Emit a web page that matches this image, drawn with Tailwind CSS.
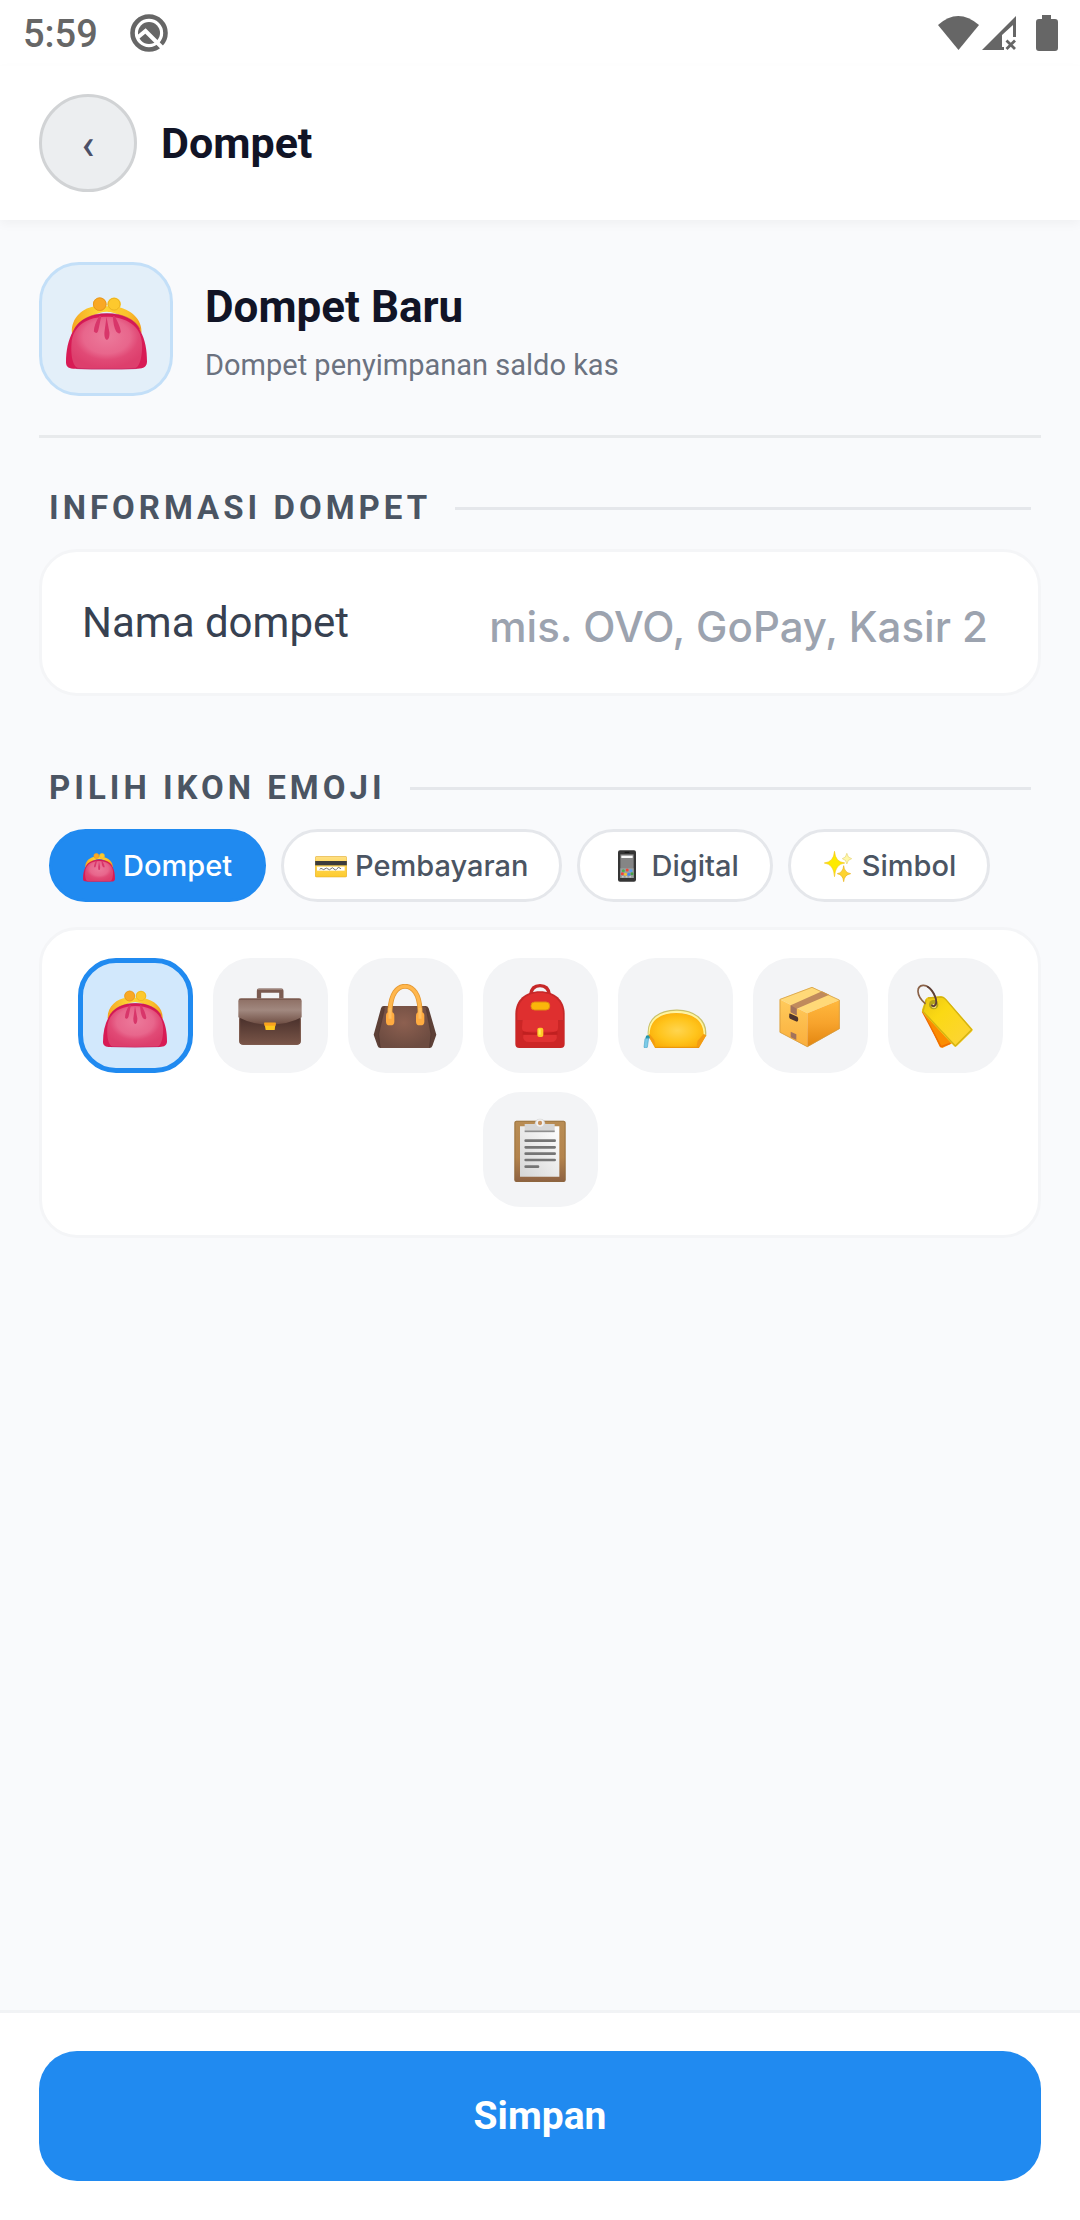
<!DOCTYPE html>
<html lang="id">
<head>
  <meta charset="UTF-8">
  <meta name="viewport" content="width=device-width, initial-scale=1.0">
  <title>Dompet</title>
  <script src="https://cdn.jsdelivr.net/npm/@tailwindcss/browser@4"></script>
</head>
<body class="bg-[#f9fafc] min-h-screen flex flex-col font-['Roboto',sans-serif]">

  <!-- Emoji artwork -->
  <svg class="absolute size-0" aria-hidden="true">
    <defs>
      <radialGradient id="g-purse" cx="0.5" cy="0.38" r="0.6">
        <stop offset="0" stop-color="#ec7a9b"/><stop offset="0.55" stop-color="#e8668c"/><stop offset="0.75" stop-color="#e14a76"/><stop offset="1" stop-color="#dd3f6d"/>
      </radialGradient>
      <linearGradient id="g-gold" x1="0" x2="1">
        <stop offset="0" stop-color="#f5a623"/><stop offset="0.4" stop-color="#fdd835"/><stop offset="0.8" stop-color="#fbc02d"/><stop offset="1" stop-color="#f2a01f"/>
      </linearGradient>
      <linearGradient id="g-flap" x1="0" y1="0" x2="0" y2="1">
        <stop offset="0" stop-color="#8d6e63"/><stop offset="0.45" stop-color="#a1887f"/><stop offset="1" stop-color="#6d4c41"/>
      </linearGradient>
      <linearGradient id="g-case" x1="0" y1="0" x2="0" y2="1">
        <stop offset="0.4" stop-color="#4e342e"/><stop offset="1" stop-color="#795548"/>
      </linearGradient>
      <radialGradient id="g-bag" cx="0.48" cy="0.4" r="0.6">
        <stop offset="0" stop-color="#8d6050"/><stop offset="1" stop-color="#6d4c41"/>
      </radialGradient>
      <radialGradient id="g-pouch" cx="0.5" cy="0.5" r="0.55">
        <stop offset="0" stop-color="#ffd54f"/><stop offset="0.6" stop-color="#ffc41c"/><stop offset="1" stop-color="#fbae08"/>
      </radialGradient>
      <linearGradient id="g-board" x1="0" y1="0" x2="0" y2="1">
        <stop offset="0" stop-color="#b98d54"/><stop offset="0.6" stop-color="#b3834c"/><stop offset="1" stop-color="#8d6142"/>
      </linearGradient>
      <linearGradient id="g-paper" x1="0" y1="1" x2="1" y2="0">
        <stop offset="0" stop-color="#d5d5d5"/><stop offset="1" stop-color="#ffffff"/>
      </linearGradient>
      <linearGradient id="g-boxr" x1="0" y1="0" x2="0" y2="1">
        <stop offset="0" stop-color="#ffb93e"/><stop offset="0.5" stop-color="#f7a32c"/><stop offset="1" stop-color="#e2850f"/>
      </linearGradient>
      <linearGradient id="g-boxl" x1="0" y1="0" x2="0" y2="1">
        <stop offset="0" stop-color="#ffcb5c"/><stop offset="1" stop-color="#faae3c"/>
      </linearGradient>
      <linearGradient id="g-tag" x1="0" y1="0" x2="1" y2="1">
        <stop offset="0" stop-color="#e9c312"/><stop offset="0.35" stop-color="#fbd914"/><stop offset="1" stop-color="#fdd33c"/>
      </linearGradient>
      <linearGradient id="g-card" x1="0" y1="0" x2="0" y2="1">
        <stop offset="0" stop-color="#ffe082"/><stop offset="0.5" stop-color="#ffd54f"/><stop offset="1" stop-color="#fdcb2e"/>
      </linearGradient>

      <symbol id="e-purse" viewBox="0 0 192 192">
        <path d="M74 54 78 34H89L91 54ZM100 54 101 36H113L117 54Z" fill="#f3a51f"/>
        <path d="M14 104C12 68 40 43 73 41Q82 40 83 34H88V41H100L104 34Q107 40 120 42C154 48 181 72 179 104L166 98Q96 10 28 98Z" fill="url(#g-gold)"/>
        <circle cx="80" cy="36" r="16" fill="#f9a825"/>
        <circle cx="80" cy="36" r="15" fill="none" stroke="#e2941d" stroke-width="2"/>
        <circle cx="114" cy="36" r="16" fill="#fdc92d"/>
        <circle cx="114" cy="36" r="14" fill="none" stroke="#e8b021" stroke-width="2"/>
        <path d="M17 99C30 72 60 58 97 58S166 72 176 99C188 120 192 146 192 172C192 184 184 189 170 189H22C8 189 0 185 0 174C0 146 5 121 17 99Z" fill="#d81b55"/>
        <path d="M13 130C16 86 52 66 97 66S178 88 180 128C182 154 176 189 160 189H34C16 189 11 158 13 130Z" fill="url(#g-purse)"/>
        <path d="M22 95C36 72 62 59 97 59S162 72 174 95" fill="none" stroke="#c2185b" stroke-opacity="0.5" stroke-width="4"/>
        <path d="M24 188Q96 192 168 188" fill="none" stroke="#c2185b" stroke-opacity="0.55" stroke-width="3"/>
        <path d="M79 64C71 76 66 90 66 101Q74 110 77 96C80 84 81 74 84 64ZM96 66 91 103C90 126 104 126 103 103ZM111 64C112 80 114 92 119 101Q128 110 130 101C128 88 122 76 115 64Z" fill="#d8366a"/>
      </symbol>

      <symbol id="e-briefcase" viewBox="0 0 192 192">
        <path d="M63 44V20H130V44" fill="none" stroke="#7b5b51" stroke-width="13" stroke-linejoin="round"/>
        <path d="M59 16H134" stroke="#a18880" stroke-width="3"/>
        <path d="M4 60H188V172Q188 182 178 182H14Q4 182 4 172Z" fill="url(#g-case)"/>
        <path d="M1 52Q1 43 10 43H182Q191 43 191 52V100Q150 122 96 122T1 100Z" fill="url(#g-flap)"/>
        <path d="M4 46H188" stroke="#7a5a50" stroke-width="4"/>
        <path d="M5 104V172Q5 181 14 181H178Q187 181 187 172V104" fill="none" stroke="#795548" stroke-width="3"/>
        <path d="M79 116H113L110 138H83Z" fill="#fdc71c"/>
        <path d="M79 116H113V125H79Z" fill="#f9a11f"/>
      </symbol>

      <symbol id="e-handbag" viewBox="0 0 192 192">
        <path d="M32 66H158Q164 66 167 73L190 152 178 186Q176 192 170 192H22Q16 192 14 186L2 152 24 73Q26 66 32 66Z" fill="#5d4037"/>
        <path d="M40 66H150Q158 66 160 74L174 150 168 192H24L17 150 34 74Q36 66 40 66Z" fill="url(#g-bag)"/>
        <path d="M17 150 20 188M174 150 170 188M34 76 17 150M160 76 174 150" stroke="#4e342e" stroke-opacity="0.6" stroke-width="3"/>
        <path d="M51 96V78C54 30 72 7 96 7S139 30 141 78V96" fill="none" stroke="#e59a35" stroke-width="15"/>
        <path d="M51 96V78C54 30 72 7 96 7S139 30 141 78V96" fill="none" stroke="#ffb74d" stroke-width="10"/>
        <rect x="39" y="84" width="25" height="40" rx="11" fill="#ffab40"/>
        <rect x="129" y="84" width="25" height="40" rx="11" fill="#ffab40"/>
        <path d="M51 72V104M141 72V104" stroke="#ffbf62" stroke-width="9"/>
      </symbol>

      <symbol id="e-backpack" viewBox="0 0 192 192">
        <path d="M68 32C70 14 80 5 96 5S122 14 124 32" fill="none" stroke="#c62828" stroke-width="10"/>
        <path d="M22 90C22 48 52 22 96 22S170 48 170 90V180Q170 192 158 192H34Q22 192 22 180Z" fill="#c62828"/>
        <path d="M28 90C28 52 56 26 96 26S165 52 165 90V108H28Z" fill="#df2f2f"/>
        <path d="M24 112H168V178Q168 188 158 188H34Q24 188 24 178Z" fill="#cc2626"/>
        <path d="M44 107H150V132Q150 143 138 143H54Q42 143 42 132Z" fill="#e03232"/>
        <path d="M46 152H146Q150 174 128 174H64Q42 174 46 152Z" fill="#e03232"/>
        <path d="M44 142Q96 156 148 142L148 152H44Z" fill="#b71c1c" fill-opacity="0.55"/>
        <rect x="69" y="54" width="56" height="24" rx="11" fill="#fbb50a" stroke="#e08a12" stroke-width="3"/>
        <rect x="88" y="131" width="18" height="28" rx="6" fill="#ffca28"/>
        <path d="M95 136V152" stroke="#ffee58" stroke-width="6"/>
      </symbol>

      <symbol id="e-pouch" viewBox="0 0 192 192">
        <path d="M18 156C12 104 50 81 100 80S192 108 186 156" fill="none" stroke="#c9c06a" stroke-width="7"/>
        <path d="M20 154C16 106 52 84 100 83S186 108 183 154" fill="none" stroke="#fff59d" stroke-width="6"/>
        <path d="M20 152C20 110 50 87 100 87S182 110 182 152L190 154 166 192H36L16 156Z" fill="url(#g-pouch)"/>
        <path d="M20 150 34 168 38 192 16 156ZM182 150 164 170 160 192H168L190 154Z" fill="#f39c12"/>
        <path d="M36 190H168" stroke="#e8920c" stroke-width="3"/>
        <circle cx="14" cy="160" r="6" fill="#2196a8"/>
        <path d="M6 164 17 162 13 190Q8 194 3 190Z" fill="#7ccbe8" stroke="#4ba6c8" stroke-width="2"/>
      </symbol>

      <symbol id="e-package" viewBox="0 0 192 192">
        <path d="M5 46 102 9 185 48 88 88Z" fill="#ffd978"/>
        <path d="M5 46 88 88V189L5 145Z" fill="url(#g-boxl)"/>
        <path d="M88 88 185 48V134L88 189Z" fill="url(#g-boxr)"/>
        <path d="M38 64 132 22 154 32 56 74V94L38 85Z" fill="#c08a5c"/>
        <path d="M38 64 56 74V94L38 85Z" fill="#a2735c"/>
        <path d="M38 143 55 151V168L38 160Z" fill="#a2735c"/>
        <path d="M34 92Q32 88 38 89L58 98Q62 101 60 110L57 113 36 104Q32 101 34 92Z" fill="#4e342e"/>
        <path d="M6 46 102 10 184 48V134L88 188 6 145Z" fill="none" stroke="#d29a3e" stroke-opacity="0.75" stroke-width="3" stroke-linejoin="round"/>
      </symbol>

      <symbol id="e-tag" viewBox="0 0 192 192">
        <path d="M28 76 70 62 118 178 88 192 80 188Z" fill="#fb8c00"/>
        <path d="M28 82 84 188 112 178" fill="none" stroke="#ef6c00" stroke-width="4"/>
        <path d="M45 40 84 37Q92 37 98 44L179 136Q180 140 176 143L132 186Q127 191 122 185L30 86Q25 80 28 74L38 46Q40 41 45 40Z" fill="url(#g-tag)"/>
        <path d="M45 42 84 39Q92 39 98 46L176 137 127 186 30 82 40 46" fill="none" stroke="#d3b212" stroke-width="4" stroke-linejoin="round"/>
        <circle cx="62" cy="62" r="14" fill="#b3a31a"/>
        <circle cx="63" cy="66" r="7" fill="#f1e27a"/>
        <path d="M36 58C8 34 10 6 30 4C54 2 78 52 66 64Q62 70 57 64" fill="none" stroke="#8a6248" stroke-width="5" stroke-linecap="round"/>
        <path d="M44 8C64 20 76 54 66 64Q62 69 57 64" fill="none" stroke="#5d4037" stroke-width="5" stroke-linecap="round"/>
      </symbol>

      <symbol id="e-clipboard" viewBox="0 0 192 192">
        <rect x="19" y="8" width="154" height="184" rx="6" fill="url(#g-board)"/>
        <rect x="21" y="10" width="150" height="180" rx="5" fill="none" stroke="#8d6a3c" stroke-opacity="0.6" stroke-width="3"/>
        <path d="M36 25H154V176H36Z" fill="url(#g-paper)"/>
        <path d="M50 18H80Q82 2 96 2T112 18H140V42H50Z" fill="#d6d6d6"/>
        <path d="M50 40H140" stroke="#8e8e8e" stroke-width="5"/>
        <circle cx="96" cy="15" r="9" fill="#c9935f" stroke="#f1f1f1" stroke-width="5"/>
        <path d="M53 68H140M53 88H140M53 107H140M53 126H140M53 146H90" stroke="#757575" stroke-width="8" stroke-linecap="round"/>
      </symbol>

      <symbol id="e-card" viewBox="0 0 192 192">
        <rect x="1" y="38" width="190" height="126" rx="8" fill="#e0a82a"/>
        <rect x="3" y="40" width="186" height="121" rx="7" fill="url(#g-card)"/>
        <path d="M1 66H191V92H1Z" fill="#3b3b3b"/>
        <path d="M12 100H178V124H12Z" fill="#ffffff"/>
        <path d="M28 116Q36 106 44 114T60 113T78 114T96 112T114 114T132 112T156 113" fill="none" stroke="#555" stroke-width="5"/>
      </symbol>

      <symbol id="e-phone" viewBox="0 0 192 192">
        <rect x="42" y="1" width="108" height="190" rx="12" fill="#353535"/>
        <rect x="56" y="26" width="80" height="142" fill="#858585"/>
        <path d="M56 110H136V168H56Z" fill="#9aa0a0"/>
        <path d="M82 14H110" stroke="#111" stroke-width="6"/>
        <path d="M62 34H130V48H62Z" fill="#fafafa"/>
        <g>
          <circle cx="74" cy="124" r="9" fill="#4caf50"/><circle cx="97" cy="120" r="9" fill="#f44336"/><circle cx="120" cy="124" r="9" fill="#5c9ded"/>
          <circle cx="68" cy="143" r="9" fill="#f44336"/><circle cx="87" cy="145" r="9" fill="#fbc02d"/><circle cx="107" cy="145" r="9" fill="#4285f4"/><circle cx="126" cy="143" r="9" fill="#43a047"/>
        </g>
        <path d="M66 161H126" stroke="#dcdcdc" stroke-width="6" stroke-dasharray="10 12"/>
      </symbol>

      <symbol id="e-sparkles" viewBox="0 0 192 192">
        <path d="M75 8Q79 72 136 78Q79 84 75 160Q71 84 14 78Q71 72 75 8Z" fill="#fdea00" stroke="#f3c613" stroke-width="4"/>
        <path d="M149 20Q152 47 178 52Q152 57 149 84Q146 57 122 52Q146 47 149 20Z" fill="#fff8a8" stroke="#e5d169" stroke-width="4"/>
        <path d="M130 94Q134 136 172 142Q134 148 130 190Q126 148 92 142Q126 136 130 94Z" fill="#fdd330" stroke="#eab31a" stroke-width="4"/>
      </symbol>
    </defs>
  </svg>

  <!-- Status bar -->
  <div class="bg-white h-[66px] pl-[23px] pr-[22px] flex items-center justify-between text-[#666666]">
    <div class="flex items-center gap-8">
      <span class="pt-0.5 text-[38px] leading-[44px] font-medium">5:59</span>
      <svg class="size-[38px]" viewBox="0 0 38 38" fill="none" aria-hidden="true">
        <circle cx="19" cy="19" r="16.500" stroke="currentColor" stroke-width="4.600"/>
        <circle cx="19" cy="19" r="11" fill="currentColor"/>
        <path d="M7 24 15.500 17 36 37.500" stroke="#fff" stroke-width="4"/>
      </svg>
    </div>
    <div class="flex items-center" aria-hidden="true">
      <svg class="w-[42px] h-[34px]" viewBox="0 0 42 34" fill="currentColor"><path d="M0 9Q20 -9 41 9L20.500 34Z"/></svg>
      <svg class="w-[34px] h-[34px] ml-0.5" viewBox="0 0 34 34">
        <path d="M0 34 34 0V21H31V9L20 19V31H22V34Z" fill="currentColor"/>
        <path d="M24.500 24.500 33 33M33 24.500 24.500 33" stroke="currentColor" stroke-width="2.800"/>
      </svg>
      <svg class="w-[22px] h-[36px] ml-5" viewBox="0 0 22 36" fill="currentColor"><path d="M6 0H15V4H19Q22 4 22 7V33Q22 36 19 36H3Q0 36 0 33V7Q0 4 3 4H6Z"/></svg>
    </div>
  </div>

  <!-- Header -->
  <header class="bg-white h-[154px] px-[39px] pt-7 flex items-start gap-6 shadow-[0_4px_10px_rgba(0,0,0,0.04)]">
    <button type="button" aria-label="Kembali" class="size-[98px] pt-1 rounded-full bg-[#eceef0] border-[3px] border-[#d1d3d5] text-[#4b5068] text-[42px] leading-10 font-medium">‹</button>
    <h1 class="text-[43px] leading-[98px] font-bold text-[#111426]">Dompet</h1>
  </header>

  <main class="flex-1 px-[39px] pt-[42px]">
    <!-- Wallet preview -->
    <section class="flex items-center gap-8 pb-[39px] border-b-[3px] border-[#e8eaec]">
      <div class="size-[134px] rounded-[40px] bg-[#e3eff9] border-[3px] border-[#c3dff8] flex items-center justify-center">
        <svg class="size-[81px]" role="img" aria-label="Dompet"><use href="#e-purse"/></svg>
      </div>
      <div class="pt-1.5">
        <h2 class="text-[44px] leading-[56px] font-bold text-[#111426]">Dompet Baru</h2>
        <p class="mt-2.5 text-[29px] leading-[40px] text-[#6b7280]">Dompet penyimpanan saldo kas</p>
      </div>
    </section>

    <!-- Name -->
    <div class="mt-[50px] px-[10px] flex items-center gap-6">
      <h3 class="text-[33px] leading-10 font-bold tracking-[4px] text-[#4b5563]">INFORMASI DOMPET</h3>
      <div class="flex-1 h-[3px] bg-[#e5e7eb]"></div>
    </div>
    <div class="mt-[21px] h-[147px] pl-10 pr-[50px] flex items-center justify-between bg-white rounded-[38px] border-[3px] border-[#f4f5f7]">
      <label for="nama" class="text-[42px] leading-[56px] text-[#374151] whitespace-nowrap">Nama dompet</label>
      <input id="nama" type="text" placeholder="mis. OVO, GoPay, Kasir 2" class="flex-1 min-w-0 pt-2 bg-transparent text-right font-['Inter',sans-serif] text-[42px] leading-[56px] font-medium text-[#374151] placeholder:text-[#9ca3af] outline-none">
    </div>

    <!-- Icon picker -->
    <div class="mt-[72px] px-[10px] flex items-center gap-6">
      <h3 class="text-[33px] leading-10 font-bold tracking-[4px] text-[#4b5563]">PILIH IKON EMOJI</h3>
      <div class="flex-1 h-[3px] bg-[#e5e7eb]"></div>
    </div>
    <div class="mt-[21px] px-[10px] flex gap-[15px] font-['Inter',sans-serif] text-[29px] leading-10 font-medium text-[#4b5563]">
      <button type="button" class="h-[73px] px-[31px] flex items-center gap-2 rounded-full border-[3px] border-[#208af0] bg-[#208af0] text-white"><svg class="size-8" aria-hidden="true"><use href="#e-purse"/></svg>Dompet</button>
      <button type="button" class="h-[73px] px-[31px] flex items-center gap-2 rounded-full border-[3px] border-[#e5e7eb] bg-white"><svg class="size-8" aria-hidden="true"><use href="#e-card"/></svg>Pembayaran</button>
      <button type="button" class="h-[73px] px-[31px] flex items-center gap-2 rounded-full border-[3px] border-[#e5e7eb] bg-white"><svg class="size-8" aria-hidden="true"><use href="#e-phone"/></svg>Digital</button>
      <button type="button" class="h-[73px] px-[31px] flex items-center gap-2 rounded-full border-[3px] border-[#e5e7eb] bg-white"><svg class="size-8" aria-hidden="true"><use href="#e-sparkles"/></svg>Simbol</button>
    </div>
    <div class="mt-[25px] px-6 py-7 flex flex-wrap justify-center gap-x-5 gap-y-[19px] bg-white rounded-[38px] border-[3px] border-[#f4f5f7]">
      <button type="button" aria-label="Dompet koin" aria-pressed="true" class="size-[115px] flex items-center justify-center rounded-[38px] border-[5px] border-[#208af0] bg-[#d2e8fc]"><svg class="size-16"><use href="#e-purse"/></svg></button>
      <button type="button" aria-label="Koper kerja" class="size-[115px] flex items-center justify-center rounded-[38px] bg-[#f3f4f6]"><svg class="size-16"><use href="#e-briefcase"/></svg></button>
      <button type="button" aria-label="Tas tangan" class="size-[115px] flex items-center justify-center rounded-[38px] bg-[#f3f4f6]"><svg class="size-16"><use href="#e-handbag"/></svg></button>
      <button type="button" aria-label="Ransel" class="size-[115px] flex items-center justify-center rounded-[38px] bg-[#f3f4f6]"><svg class="size-16"><use href="#e-backpack"/></svg></button>
      <button type="button" aria-label="Pouch" class="size-[115px] flex items-center justify-center rounded-[38px] bg-[#f3f4f6]"><svg class="size-16"><use href="#e-pouch"/></svg></button>
      <button type="button" aria-label="Paket" class="size-[115px] flex items-center justify-center rounded-[38px] bg-[#f3f4f6]"><svg class="size-16"><use href="#e-package"/></svg></button>
      <button type="button" aria-label="Label" class="size-[115px] flex items-center justify-center rounded-[38px] bg-[#f3f4f6]"><svg class="size-16"><use href="#e-tag"/></svg></button>
      <button type="button" aria-label="Papan klip" class="size-[115px] flex items-center justify-center rounded-[38px] bg-[#f3f4f6]"><svg class="size-16"><use href="#e-clipboard"/></svg></button>
    </div>
  </main>

  <!-- Save bar -->
  <footer class="bg-white border-t-[3px] border-[#f1f3f5] px-[39px] pt-[38px] pb-[39px]">
    <button type="button" class="w-full h-[130px] rounded-[38px] bg-[#208af0] text-white text-[39px] leading-[48px] font-bold">Simpan</button>
  </footer>

</body>
</html>
